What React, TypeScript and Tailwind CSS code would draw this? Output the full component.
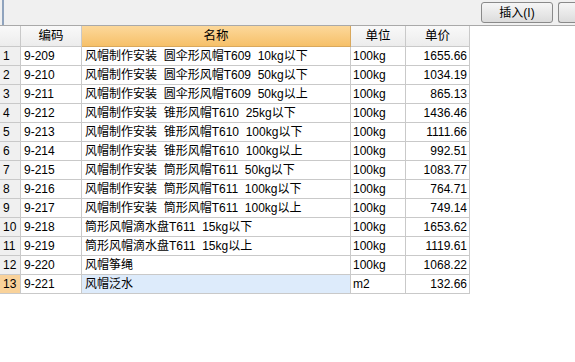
import React from 'react'

interface Row {
  code: string
  name: string
  unit: string
  price: string
}

const rows: Row[] = [
  { code: '9-209', name: '风帽制作安装  圆伞形风帽T609  10kg以下', unit: '100kg', price: '1655.66' },
  { code: '9-210', name: '风帽制作安装  圆伞形风帽T609  50kg以下', unit: '100kg', price: '1034.19' },
  { code: '9-211', name: '风帽制作安装  圆伞形风帽T609  50kg以上', unit: '100kg', price: '865.13' },
  { code: '9-212', name: '风帽制作安装  锥形风帽T610  25kg以下', unit: '100kg', price: '1436.46' },
  { code: '9-213', name: '风帽制作安装  锥形风帽T610  100kg以下', unit: '100kg', price: '1111.66' },
  { code: '9-214', name: '风帽制作安装  锥形风帽T610  100kg以上', unit: '100kg', price: '992.51' },
  { code: '9-215', name: '风帽制作安装  筒形风帽T611  50kg以下', unit: '100kg', price: '1083.77' },
  { code: '9-216', name: '风帽制作安装  筒形风帽T611  100kg以下', unit: '100kg', price: '764.71' },
  { code: '9-217', name: '风帽制作安装  筒形风帽T611  100kg以上', unit: '100kg', price: '749.14' },
  { code: '9-218', name: '筒形风帽滴水盘T611  15kg以下', unit: '100kg', price: '1653.62' },
  { code: '9-219', name: '筒形风帽滴水盘T611  15kg以上', unit: '100kg', price: '1119.61' },
  { code: '9-220', name: '风帽筝绳', unit: '100kg', price: '1068.22' },
  { code: '9-221', name: '风帽泛水', unit: 'm2', price: '132.66' },
]

const cell = 'h-[19px] border-r border-b border-[#c9c9c9] flex items-center text-[12px] leading-none text-black whitespace-pre'
const head = 'h-[21px] border-r border-b border-[#c9c9c9] flex items-center justify-center text-[12.5px] text-black bg-gradient-to-b from-[#f9f9f9] to-[#ececec]'

export default function App() {
  return (
    <div className="w-[575px] h-[362px] bg-white overflow-hidden font-['Liberation_Sans','Noto_Sans_CJK_SC',sans-serif]">
      {/* toolbar */}
      <div className="h-[26px] bg-[#f0f0f0] border-b border-[#a9a9a9] flex items-start">
        <div className="w-[2px] h-full ml-[2px] bg-[#8fa3bd]" />
        <div className="flex-1" />
        <button className="mt-[2px] w-[72px] h-[21px] rounded-[3px] border border-[#8a8a8a] bg-gradient-to-b from-[#f6f6f6] to-[#dcdcdc] text-[12px] text-black leading-none">
          插入(I)
        </button>
        <button className="mt-[2px] ml-[5px] w-[17px] h-[21px] rounded-l-[3px] border border-r-0 border-[#8a8a8a] bg-gradient-to-b from-[#f6f6f6] to-[#dcdcdc]" />
      </div>

      {/* grid */}
      <div className="w-[470px] grid grid-cols-[21px_61px_269px_55px_64px]">
        <div className={`${head}`} />
        <div className={head}>编码</div>
        <div className="h-[21px] border-r border-b border-[#d9a85c] flex items-center justify-center text-[12.5px] text-black bg-gradient-to-b from-[#fcd89a] to-[#f6c068]">名称</div>
        <div className={head}>单位</div>
        <div className={head}>单价</div>

        {rows.map((r, i) => {
          const last = i === rows.length - 1
          return (
            <React.Fragment key={r.code}>
              <div className={`${cell} pl-[3px] ${last ? 'bg-[#f9d29a]' : 'bg-[#f0f0f0]'}`}>{i + 1}</div>
              <div className={`${cell} pl-[3px]`}>{r.code}</div>
              <div className={`${cell} pl-[3px] ${last ? 'bg-[#ddebfb]' : ''}`}>{r.name}</div>
              <div className={`${cell} pl-[2px]`}>{r.unit}</div>
              <div className={`${cell} justify-end pr-[2px]`}>{r.price}</div>
            </React.Fragment>
          )
        })}
      </div>
    </div>
  )
}
